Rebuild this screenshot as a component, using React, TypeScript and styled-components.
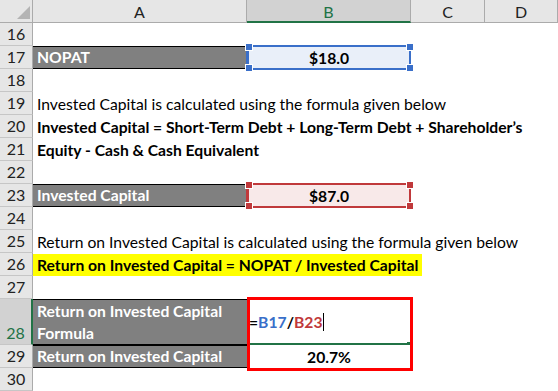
import React from "react";
import styled, { createGlobalStyle, css } from "styled-components";

const GlobalStyle = createGlobalStyle`
  html, body {
    margin: 0;
    padding: 0;
    background: #ffffff;
  }
  body {
    font-family: Lato, "Open Sans", "Liberation Sans", sans-serif;
    color: #000;
  }
`;

const Sheet = styled.div`
  display: grid;
  grid-template-columns: 33px 214px 164px 74px 73px;
  grid-template-rows: 23px repeat(12, 23px) 46px 23px 23px;
  width: 558px;
  height: 391px;
  overflow: hidden;
  font-size: 15.7px;
`;

const Corner = styled.div`
  background: #e6e6e6;
  border-right: 1px solid #ababab;
  border-bottom: 1px solid #ababab;
  box-sizing: border-box;
  display: flex;
  align-items: flex-end;
  justify-content: flex-end;
  padding: 0 2px 3px 0;
`;

const ColHeader = styled.div<{ $active?: boolean }>`
  background: ${(p) => (p.$active ? "#d2d2d2" : "#e6e6e6")};
  border-right: 1px solid #ababab;
  border-bottom: ${(p) => (p.$active ? "2px solid #217346" : "1px solid #ababab")};
  box-sizing: border-box;
  display: flex;
  align-items: center;
  justify-content: center;
  font-size: 16px;
  color: ${(p) => (p.$active ? "#217346" : "#222")};
  padding-top: 1px;
`;

const RowHeader = styled.div<{ $active?: boolean }>`
  background: ${(p) => (p.$active ? "#d2d2d2" : "#e6e6e6")};
  border-bottom: 1px solid #c6c6c6;
  border-right: ${(p) => (p.$active ? "2px solid #217346" : "1px solid #ababab")};
  box-sizing: border-box;
  display: flex;
  align-items: flex-end;
  justify-content: center;
  padding-bottom: 1px;
  font-size: 16px;
  line-height: 20px;
  color: ${(p) => (p.$active ? "#217346" : "#222")};
`;

type CellProps = {
  $fill?: string;
  $bold?: boolean;
  $light?: boolean;
  $center?: boolean;
  $boxed?: boolean;
  $span?: number;
};

const Cell = styled.div<CellProps>`
  position: relative;
  box-sizing: border-box;
  display: flex;
  align-items: flex-end;
  justify-content: ${(p) => (p.$center ? "center" : "flex-start")};
  padding: 0 4px 0 4px;
  line-height: 21px;
  white-space: nowrap;
  background: ${(p) => p.$fill || "transparent"};
  font-weight: ${(p) => (p.$bold ? 700 : 400)};
  color: ${(p) => (p.$light ? "#ffffff" : "#000")};
  ${(p) => p.$span && css`grid-column: span ${p.$span};`}
  ${(p) =>
    p.$boxed &&
    css`
      border-top: 1px solid #000;
      border-bottom: 1px solid #000;
    `}
`;

const Wrapped = styled.span`
  white-space: normal;
  line-height: 22px;
`;

const Highlight = styled.span`
  background: #ffff00;
  font-weight: 700;
  padding: 0 4px;
  margin-left: -4px;
  line-height: 22px;
`;

const Frame = styled.div<{ $color: string }>`
  position: absolute;
  top: -1px;
  bottom: -1px;
  left: -1px;
  right: 0;
  border: 2px solid ${(p) => p.$color};
  border-left-width: 3px;
  pointer-events: none;
`;

const Handle = styled.span<{ $color: string; $x: "left" | "right"; $y: "top" | "bottom" }>`
  position: absolute;
  width: 6px;
  height: 6px;
  background: ${(p) => p.$color};
  border: 1px solid #fff;
  ${(p) => (p.$x === "left" ? "left: -4px;" : "right: -5px;")}
  ${(p) => (p.$y === "top" ? "top: -4px;" : "bottom: -4px;")}
`;

const EditCell = styled(Cell)`
  border-bottom: 2px solid #217346;
  align-items: center;
  padding-top: 2px;
  padding-left: 2px;
`;

const Ref = styled.span<{ $c: string }>`
  color: ${(p) => p.$c};
`;

const Caret = styled.span`
  display: inline-block;
  width: 1px;
  height: 18px;
  background: #000;
  margin-left: 1px;
  vertical-align: middle;
`;

const RedBox = styled.div`
  position: absolute;
  top: -2px;
  left: 0;
  right: -2px;
  height: 74px;
  border: 3px solid #ff0000;
  box-sizing: border-box;
  pointer-events: none;
  z-index: 2;
`;

const FillHandle = styled.span`
  position: absolute;
  right: 1px;
  bottom: -2px;
  width: 3px;
  height: 3px;
  background: #217346;
`;

function Selection({ color }: { color: string }) {
  return (
    <Frame $color={color}>
      <Handle $color={color} $x="left" $y="top" />
      <Handle $color={color} $x="right" $y="top" />
      <Handle $color={color} $x="left" $y="bottom" />
      <Handle $color={color} $x="right" $y="bottom" />
    </Frame>
  );
}

function Empty({ n }: { n: number }) {
  return (
    <>
      <RowHeader>{n}</RowHeader>
      <Cell />
      <Cell />
      <Cell />
      <Cell />
    </>
  );
}

export default function App() {
  return (
    <>
      <GlobalStyle />
      <Sheet>
        <Corner>
          <svg width="13" height="13" viewBox="0 0 13 13">
            <polygon points="13,0 13,13 0,13" fill="#b4b4b4" />
          </svg>
        </Corner>
        <ColHeader>A</ColHeader>
        <ColHeader $active>B</ColHeader>
        <ColHeader>C</ColHeader>
        <ColHeader>D</ColHeader>

        <Empty n={16} />

        <RowHeader>17</RowHeader>
        <Cell $fill="#808080" $bold $light $boxed>NOPAT</Cell>
        <Cell $fill="#e9eff9" $bold $center>
          $18.0
          <Selection color="#3a6fc9" />
        </Cell>
        <Cell />
        <Cell />

        <Empty n={18} />

        <RowHeader>19</RowHeader>
        <Cell $span={4}>Invested Capital is calculated using the formula given below</Cell>

        <RowHeader>20</RowHeader>
        <Cell $span={4} $bold>
          Invested Capital = Short-Term Debt + Long-Term Debt + Shareholder’s
        </Cell>

        <RowHeader>21</RowHeader>
        <Cell $span={4} $bold>Equity - Cash &amp; Cash Equivalent</Cell>

        <Empty n={22} />

        <RowHeader>23</RowHeader>
        <Cell $fill="#808080" $bold $light $boxed>Invested Capital</Cell>
        <Cell $fill="#f8e9e9" $bold $center>
          $87.0
          <Selection color="#c0393b" />
        </Cell>
        <Cell />
        <Cell />

        <Empty n={24} />

        <RowHeader>25</RowHeader>
        <Cell $span={4}>Return on Invested Capital is calculated using the formula given below</Cell>

        <RowHeader>26</RowHeader>
        <Cell $span={4}>
          <Highlight>Return on Invested Capital = NOPAT / Invested Capital</Highlight>
        </Cell>

        <Empty n={27} />

        <RowHeader $active>28</RowHeader>
        <Cell $fill="#808080" $bold $light $boxed>
          <Wrapped>Return on Invested Capital Formula</Wrapped>
        </Cell>
        <EditCell $bold>
          =<Ref $c="#3a6fc9">B17</Ref>/<Ref $c="#c0393b">B23</Ref>
          <Caret />
          <FillHandle />
          <RedBox />
        </EditCell>
        <Cell />
        <Cell />

        <RowHeader>29</RowHeader>
        <Cell $fill="#808080" $bold $light $boxed>Return on Invested Capital</Cell>
        <Cell $bold $center>20.7%</Cell>
        <Cell />
        <Cell />

        <Empty n={30} />
      </Sheet>
    </>
  );
}
